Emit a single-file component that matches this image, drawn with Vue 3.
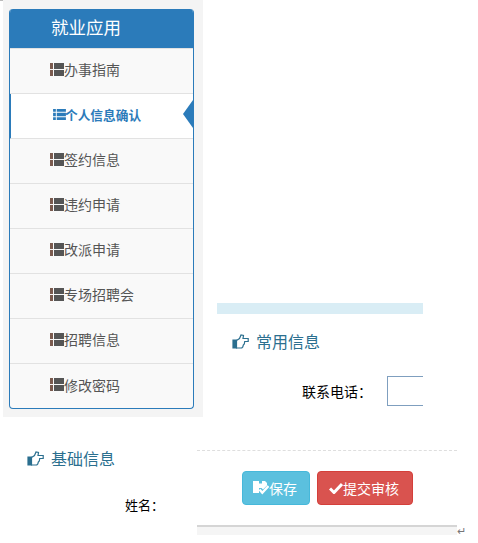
<template>
  <div class="page">
    <div class="top">
      <aside class="side">
        <div class="menu">
          <div class="menu-title">就业应用</div>
          <div
            v-for="item in menu"
            :key="item"
            class="menu-item"
            :class="{ active: item === activeItem }"
          >
            <svg v-if="item === activeItem" class="list-icon" viewBox="0 0 14 12">
              <path d="M0 0h3v3H0zM4 0h10v3H4zM0 4h3v4H0zM4 4h10v4H4zM0 9h3v3H0zM4 9h10v3H4z" />
            </svg>
            <svg v-else class="list-icon" viewBox="0 0 14 13">
              <path class="cuff" d="M0 0h3v6H0zM0 7h3v6H0z" />
              <path d="M4 0h10v6H4zM4 7h10v6H4z" />
            </svg>
            <span>{{ item }}</span>
          </div>
        </div>
      </aside>
      <div class="right-top">
        <div class="band"></div>
        <h3 class="section-title">
          <svg class="hand" viewBox="0 0 17 15">
            <path class="hand-cuff" d="M1 6h3.500v8H1z" />
            <path d="M4.500 6.500 7.500 4.500 9 1l2.500.5L11 4.500h5.200v3h-3.500L12.300 10l-1 1-.5 2-1 1H4.500z" />
          </svg>
          常用信息
        </h3>
        <div class="field">
          <label>联系电话：</label>
          <div class="input"></div>
        </div>
      </div>
    </div>
    <div class="bottom">
      <div class="left-bottom">
        <h3 class="section-title">
          <svg class="hand" viewBox="0 0 17 15">
            <path class="hand-cuff" d="M1 6h3.500v8H1z" />
            <path d="M4.500 6.500 7.500 4.500 9 1l2.500.5L11 4.500h5.200v3h-3.500L12.300 10l-1 1-.5 2-1 1H4.500z" />
          </svg>
          基础信息
        </h3>
        <div class="name-field">姓名：</div>
      </div>
      <div class="right-bottom">
        <div class="actions">
          <button class="btn save">
            <svg class="btn-icon" viewBox="0 0 16 15">
              <path fill-rule="evenodd" d="M0 0h12l2 2v2.500L10 8.500 8.500 7H6v5H0zM6 0h3v2.500H6z" fill="#fff" />
              <path d="M6.500 8.500l2.800 3.200L15.500 5" fill="none" stroke="#fff" stroke-width="2.400" />
            </svg>
            保存
          </button>
          <button class="btn submit">
            <svg class="btn-icon check" viewBox="0 0 14 12">
              <path d="M1 6.500l4 4L13 2" fill="none" stroke="#fff" stroke-width="3" />
            </svg>
            提交审核
          </button>
        </div>
        <div class="bar-row">
          <div class="bar"></div>
          <span class="return">↵</span>
        </div>
      </div>
    </div>
  </div>
</template>

<script setup>
const menu = ['办事指南', '个人信息确认', '签约信息', '违约申请', '改派申请', '专场招聘会', '招聘信息', '修改密码']
const activeItem = '个人信息确认'
</script>

<style scoped>
.page {
  position: relative;
  width: 478px;
  height: 543px;
  overflow: hidden;
  background: #fff;
  font-family: "Noto Sans CJK SC", "Liberation Sans", sans-serif;
}
/* small grey corner at the very top left */
.page::before {
  content: "";
  position: absolute;
  left: 0;
  top: 0;
  width: 3px;
  height: 1px;
  background: #bbb;
}
.top {
  display: flex;
  height: 417px;
}
.side {
  box-sizing: border-box;
  width: 200px;
  height: 417px;
  margin-left: 3px;
  padding: 9px 10px 0 6px;
  background: #f4f4f4;
}
.menu {
  box-sizing: border-box;
  width: 185px;
  height: 400px;
  border: 1px solid #2b7bba;
  border-top: 0;
  border-radius: 4px;
  background: #f9f9f9;
  overflow: hidden;
}
.menu-title {
  box-sizing: border-box;
  height: 40px;
  margin: 0 -1px;
  padding-left: 42px;
  border-bottom: 1px solid #e2e2e2;
  background: #2b7bba;
  color: #fff;
  font-size: 17.500px;
  line-height: 35px;
}
.menu-item {
  box-sizing: border-box;
  position: relative;
  display: flex;
  align-items: center;
  height: 45px;
  padding: 0 0 4px 40px;
  border-bottom: 1px solid #e2e2e2;
  color: #555;
  font-size: 14px;
}
.menu-item:last-child {
  border-bottom: 0;
}
.list-icon {
  width: 14px;
  height: 13px;
  fill: #555;
  flex-shrink: 0;
}
.cuff {
  fill: #7a5a4e;
}
.menu-item.active {
  margin-left: -1px;
  padding: 0 0 3px 42px;
  border-left: 2px solid #2b7bba;
  background: #fff;
  color: #2b7bba;
  font-size: 12.700px;
  font-weight: 700;
}
.menu-item.active .list-icon {
  width: 13px;
  height: 11px;
  margin-right: -1px;
  fill: #2b7bba;
}
.menu-item.active::after {
  content: "";
  position: absolute;
  right: 0;
  top: 6px;
  border-top: 14px solid transparent;
  border-bottom: 14px solid transparent;
  border-right: 10px solid #2b7bba;
}
.right-top {
  width: 206px;
  margin-left: 14px;
  padding-top: 303px;
  overflow: hidden;
}
.band {
  height: 11px;
  background: #d9edf5;
}
.section-title {
  display: flex;
  align-items: center;
  gap: 7px;
  margin: 0;
  color: #2b6f8f;
  font-size: 16px;
  font-weight: 400;
  line-height: 24px;
}
.right-top .section-title {
  margin: 15px 0 0 15px;
}
.hand {
  width: 17px;
  height: 15px;
  fill: #fff;
  stroke: #2b6f8f;
  stroke-width: 1.200;
}
.hand-cuff {
  fill: #2b6f8f;
}
.field {
  display: flex;
  align-items: center;
  margin-top: 23px;
  padding-left: 85px;
  color: #000;
  font-size: 14px;
}
.field label {
  flex-shrink: 0;
  width: 85px;
  white-space: nowrap;
}
.input {
  box-sizing: border-box;
  flex-shrink: 0;
  width: 60px;
  height: 30px;
  border: 1px solid #7f9fbf;
}
.bottom {
  display: flex;
}
.left-bottom {
  width: 197px;
}
.left-bottom .section-title {
  margin: 29px 0 0 27px;
}
.name-field {
  margin: 25px 0 0 125px;
  color: #000;
  font-size: 13px;
  line-height: 20px;
}
.right-bottom {
  width: 281px;
  padding-top: 33px;
}
.actions {
  display: flex;
  gap: 7px;
  width: 260px;
  padding: 20px 0 20px 45px;
  box-sizing: border-box;
  border-top: 1px dashed #dedede;
}
.btn {
  display: flex;
  align-items: center;
  justify-content: center;
  box-sizing: border-box;
  height: 34px;
  padding: 0 2px 0 0;
  border: 1px solid;
  border-radius: 4px;
  color: #fff;
  font-family: inherit;
  font-size: 14px;
}
.save {
  width: 68px;
  background: #5bc0de;
  border-color: #46b8da;
}
.submit {
  width: 96px;
  background: #d9534f;
  border-color: #d43f3a;
}
.btn-icon {
  width: 16px;
  height: 15px;
}
.check {
  width: 14px;
  height: 12px;
}
.bar-row {
  display: flex;
  align-items: flex-end;
}
.bar {
  box-sizing: border-box;
  width: 260px;
  height: 10px;
  background: #f5f5f5;
  border-top: 2px solid #d5d5d5;
}
.return {
  color: #777;
  font-size: 11px;
  line-height: 10px;
}
</style>

<style>
html,
body {
  margin: 0;
  background: #fff;
}
</style>
